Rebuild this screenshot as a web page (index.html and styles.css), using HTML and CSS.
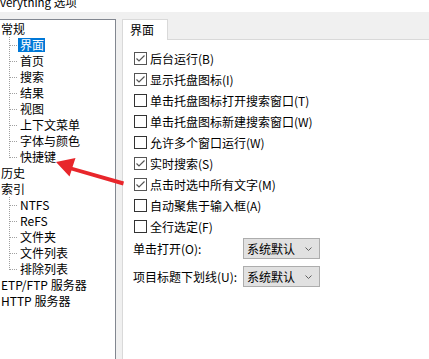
FILE: index.html
```html
<!DOCTYPE html>
<html lang="zh-CN">
<head>
<meta charset="utf-8">
<title>Everything 选项</title>
<link rel="stylesheet" href="styles.css">
</head>
<body>
<div class="title"><span>verything 选项</span></div>
<div class="main">
  <div class="tree">
    <div class="node">常规</div>
    <div class="child"><span class="sel">界面</span></div>
    <div class="child">首页</div>
    <div class="child">搜索</div>
    <div class="child">结果</div>
    <div class="child">视图</div>
    <div class="child">上下文菜单</div>
    <div class="child">字体与颜色</div>
    <div class="child last">快捷键</div>
    <div class="node">历史</div>
    <div class="node">索引</div>
    <div class="child">NTFS</div>
    <div class="child">ReFS</div>
    <div class="child">文件夹</div>
    <div class="child">文件列表</div>
    <div class="child last">排除列表</div>
    <div class="node">ETP/FTP 服务器</div>
    <div class="node">HTTP 服务器</div>
  </div>
  <div class="tabs">
    <div class="tabbar"><div class="tab">界面</div></div>
    <div class="page">
      <div class="row"><span class="cb on"><svg viewBox="0 0 11 11" width="11" height="11"><polyline points="1.5,5.5 4,8 9.5,2.5" /></svg></span><span>后台运行(B)</span></div>
      <div class="row"><span class="cb on"><svg viewBox="0 0 11 11" width="11" height="11"><polyline points="1.5,5.5 4,8 9.5,2.5" /></svg></span><span>显示托盘图标(I)</span></div>
      <div class="row"><span class="cb"></span><span>单击托盘图标打开搜索窗口(T)</span></div>
      <div class="row"><span class="cb"></span><span>单击托盘图标新建搜索窗口(W)</span></div>
      <div class="row"><span class="cb"></span><span>允许多个窗口运行(W)</span></div>
      <div class="row"><span class="cb on"><svg viewBox="0 0 11 11" width="11" height="11"><polyline points="1.5,5.5 4,8 9.5,2.5" /></svg></span><span>实时搜索(S)</span></div>
      <div class="row"><span class="cb on"><svg viewBox="0 0 11 11" width="11" height="11"><polyline points="1.5,5.5 4,8 9.5,2.5" /></svg></span><span>点击时选中所有文字(M)</span></div>
      <div class="row"><span class="cb"></span><span>自动聚焦于输入框(A)</span></div>
      <div class="row"><span class="cb"></span><span>全行选定(F)</span></div>
      <div class="field first"><span class="lbl">单击打开(O):</span><div class="combo"><span>系统默认</span><svg viewBox="0 0 7 4" width="7" height="4"><polyline points="0.5,0.5 3.5,3.5 6.5,0.5" /></svg></div></div>
      <div class="field second"><span class="lbl">项目标题下划线(U):</span><div class="combo"><span>系统默认</span><svg viewBox="0 0 7 4" width="7" height="4"><polyline points="0.5,0.5 3.5,3.5 6.5,0.5" /></svg></div></div>
    </div>
  </div>
</div>
<svg class="arrow" viewBox="0 0 429 359" width="429" height="359">
  <polygon points="56,162 75.5,158 72.5,167 124,181.5 123,185.5 71.5,170.5 69.5,176.5" />
</svg>
</body>
</html>
```

FILE: styles.css
```css
html, body {
  margin: 0;
  height: 100%;
  overflow: hidden;
}
body {
  background: #f0f0f0;
  font: 12px/16px "Noto Sans CJK SC", "Microsoft YaHei", sans-serif;
  color: #000;
  position: relative;
}
.title {
  height: 12px;
  background: #fff;
  overflow: hidden;
}
.title span {
  display: block;
  margin-top: -6px;
  line-height: 16px;
  font-size: 11.5px;
  white-space: nowrap;
}
.main {
  display: flex;
  padding-top: 7px;
  height: 340px;
}
.tree {
  width: 115px;
  background: #fff;
  border-top: 1px solid #828790;
  border-right: 1px solid #828790;
  padding-top: 1px;
  white-space: nowrap;
}
.node {
  height: 16px;
  padding-left: 1px;
}
.child {
  height: 16px;
  padding-left: 20px;
  background-image:
    repeating-linear-gradient(to bottom, #a0a0a0 0 1px, transparent 1px 2px),
    repeating-linear-gradient(to right, #a0a0a0 0 1px, transparent 1px 2px);
  background-size: 1px 16px, 8px 1px;
  background-position: 9px 0, 10px 8px;
  background-repeat: no-repeat;
}
.child.last {
  background-size: 1px 9px, 8px 1px;
}
.sel {
  display: inline-block;
  background: #0078d7;
  color: #fff;
  line-height: 14px;
  margin: 1px 0 0 -2px;
  padding: 0 1px 0 2px;
}
.tabs {
  flex: 1;
  margin-left: 6px;
  display: flex;
  flex-direction: column;
}
.tabbar {
  height: 20px;
  display: flex;
}
.tab {
  position: relative;
  width: 46px;
  height: 21px;
  box-sizing: border-box;
  background: #fff;
  border: 1px solid #d9d9d9;
  border-bottom: none;
  padding-left: 7px;
  line-height: 19px;
  margin-bottom: -1px;
}
.page {
  flex: 1;
  background: #fff;
  border-top: 1px solid #d9d9d9;
  border-left: 1px solid #d9d9d9;
  padding: 8px 0 0 11px;
}
.row {
  height: 21px;
  display: flex;
  align-items: center;
  gap: 3px;
  white-space: nowrap;
}
.cb {
  width: 13px;
  height: 13px;
  box-sizing: border-box;
  border: 1px solid #333;
  background: #fff;
  display: flex;
  align-items: center;
  justify-content: center;
  flex: none;
}
.cb.on {
  border-color: #555;
}
.cb svg polyline {
  fill: none;
  stroke: #555;
  stroke-width: 1.2;
}
.field {
  display: flex;
  align-items: center;
  height: 21px;
  margin-left: -1px;
  white-space: nowrap;
}
.field.first {
  margin-top: 1px;
}
.field.second {
  margin-top: 7px;
}
.lbl {
  width: 110px;
}
.combo {
  width: 77px;
  height: 21px;
  box-sizing: border-box;
  border: 1px solid #adadad;
  background: #e1e1e1;
  display: flex;
  align-items: center;
  justify-content: space-between;
  padding: 0 7px 0 3px;
}
.combo svg polyline {
  fill: none;
  stroke: #606060;
  stroke-width: 1;
}
.arrow {
  position: absolute;
  left: 0;
  top: 0;
  pointer-events: none;
}
.arrow polygon {
  fill: #e8262b;
}
```
